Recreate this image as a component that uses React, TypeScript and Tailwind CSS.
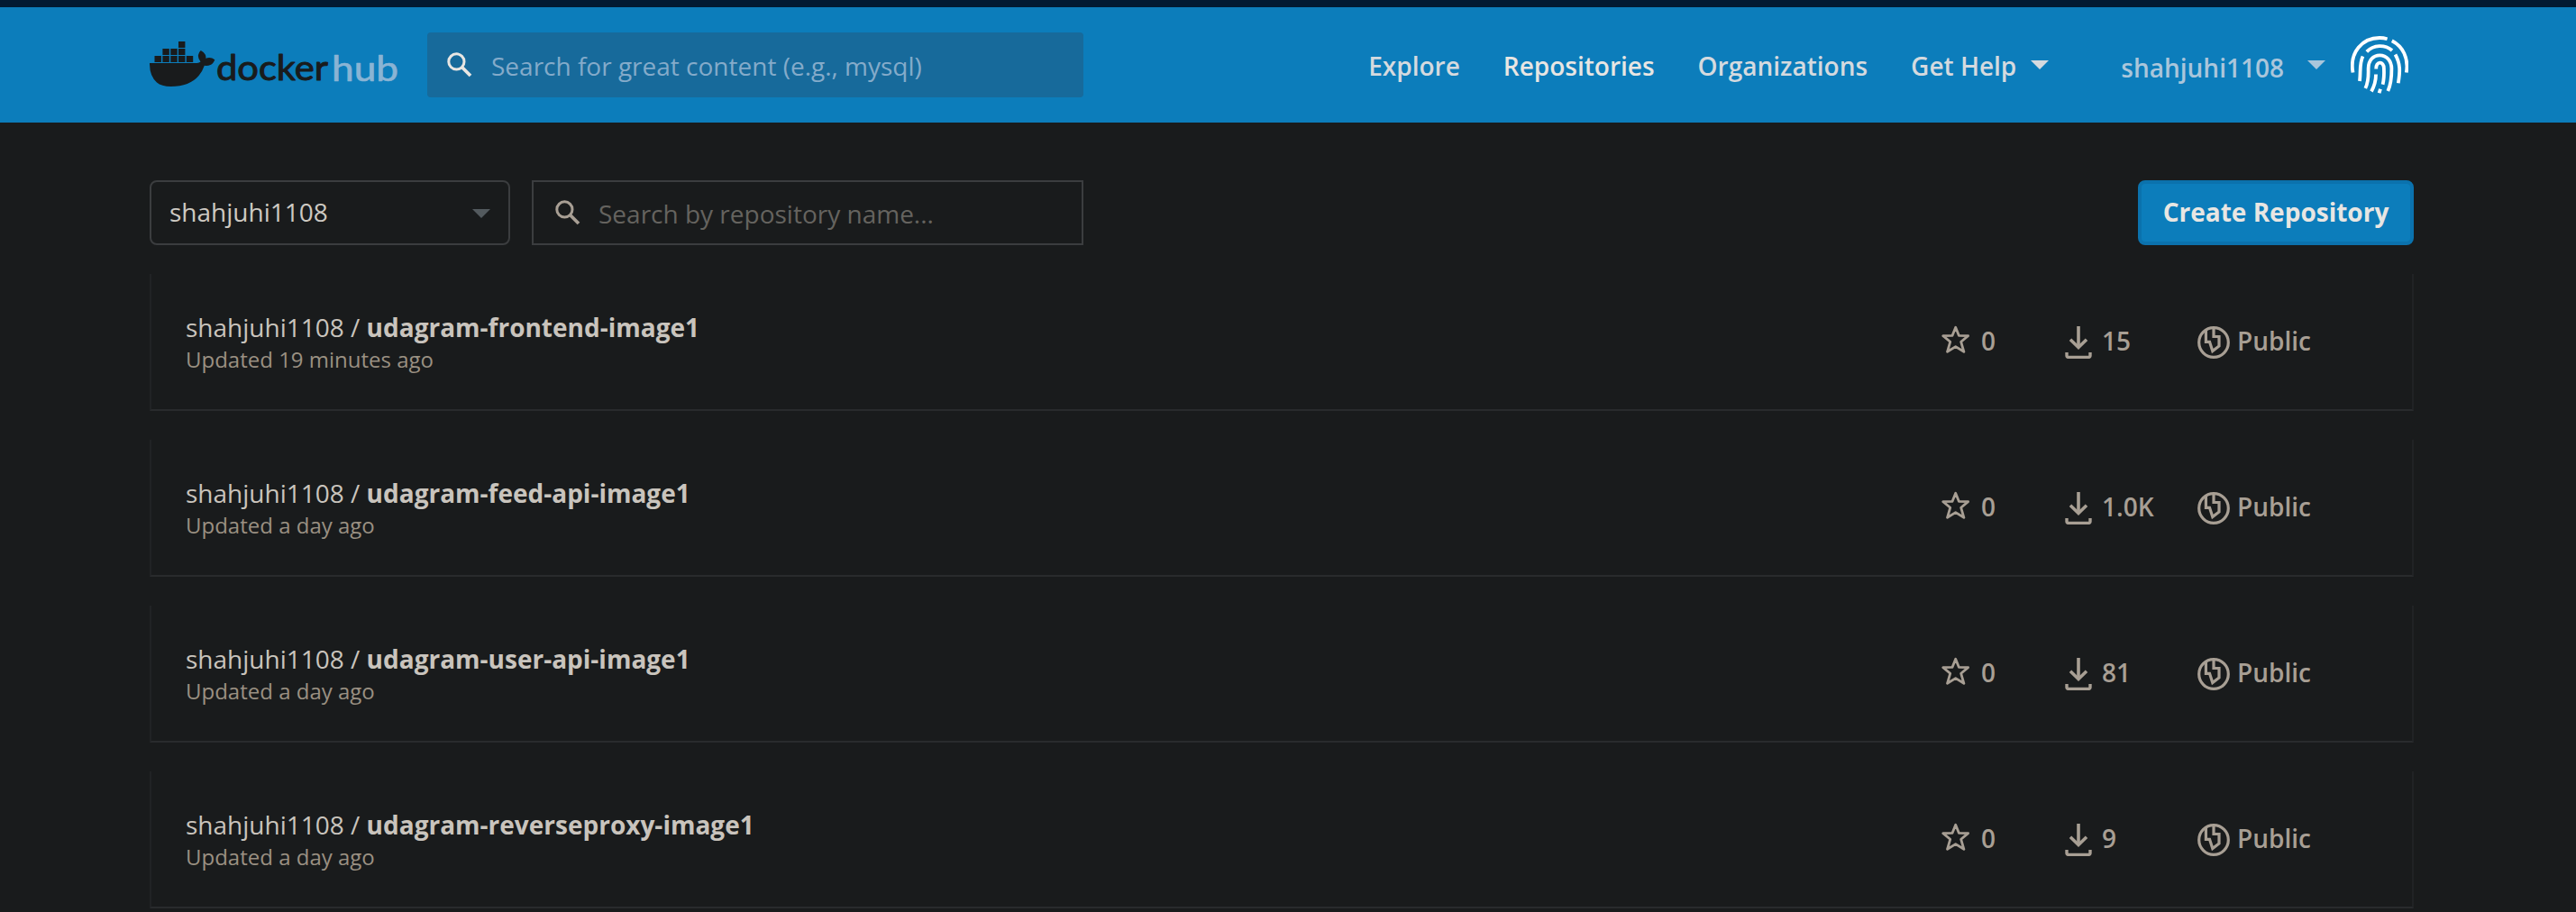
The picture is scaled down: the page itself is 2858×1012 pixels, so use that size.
import type { ReactNode } from "react";

const repositories = [
  { name: "udagram-frontend-image1", updated: "Updated 19 minutes ago", stars: "0", pulls: "15" },
  { name: "udagram-feed-api-image1", updated: "Updated a day ago", stars: "0", pulls: "1.0K" },
  { name: "udagram-user-api-image1", updated: "Updated a day ago", stars: "0", pulls: "81" },
  { name: "udagram-reverseproxy-image1", updated: "Updated a day ago", stars: "0", pulls: "9" },
];

const crates = [
  [32, 46],
  [14.4, 54], [23.3, 54], [32, 54],
  [5.5, 62], [14.4, 62], [23.3, 62], [32, 62], [40.8, 62],
];

function Logo() {
  return (
    <svg width="276" height="64" viewBox="0 40 276 64" className="block shrink-0">
      <g fill="#191b1c">
        {crates.map(([x, y]) => (
          <rect key={`${x}-${y}`} x={x} y={y} width="7.4" height="7" />
        ))}
        <path d="M0 70H52.6Q55 69.9 56.5 68.5Q53.4 64.5 54 61Q54.4 58 56.8 56Q60.5 58 61.7 60.5Q62.7 62.5 62.3 64.8Q67.5 62.6 72.3 66.2Q70.6 71 67.5 72Q64.5 73.3 60.8 72.8Q58.5 79.500 54.5 84Q44.5 95.8 23.5 96Q13 95.8 8 91.5Q-0.2 84.5 0 70Z" />
      </g>
      <g fontFamily="'Lato', 'Open Sans', sans-serif" fontSize="39" strokeLinejoin="round">
        <text x="74" y="89.2" textLength="124" lengthAdjust="spacingAndGlyphs" fill="#191b1c" stroke="#191b1c" strokeWidth="1">
          docker
        </text>
        <text x="202" y="90" textLength="74" lengthAdjust="spacingAndGlyphs" fill="#8ab4d4" stroke="#8ab4d4" strokeWidth="0.7">
          hub
        </text>
      </g>
    </svg>
  );
}

function SearchIcon({ className }: { className: string }) {
  return (
    <svg width="28" height="28" viewBox="0 0 28 28" fill="none" stroke="currentColor" className={className}>
      <circle cx="10.4" cy="10.4" r="8.6" strokeWidth="3" />
      <path d="M16.5 16.5L26 26" strokeWidth="3.8" />
    </svg>
  );
}

function Caret({ className }: { className: string }) {
  return (
    <svg width="20" height="10" viewBox="0 0 20 10" fill="currentColor" className={className}>
      <path d="M0 0H20L10 10Z" />
    </svg>
  );
}

function Fingerprint() {
  return (
    <svg width="64" height="64" viewBox="0 0 64 64" fill="none" stroke="#fff" strokeWidth="3.8" className="block shrink-0">
      <path d="M2.500 40.5C-1.5 18 13 2 32 2Q36.5 2 40.6 3.2" />
      <path d="M45.8 5.2C58 11.5 64.5 24.5 61.800 40.5" />
      <path d="M17.8 17.4C25.5 9.2 38 9.2 46 16" />
      <path d="M13.5 22.5C9.5 31 11.3 38 10 50" />
      <path d="M49.5 20.5C55.5 31 54.8 40 52.8 52.3" />
      <path d="M16.3 58C20.5 49 19.5 43 19.6 36C19.6 27 25 21.3 32.3 21.3C40 21.3 45.2 27.5 45.4 36C45.5 46 44.5 54 41.3 61" />
      <path d="M23 61.5C26.5 55 28 50 28 42.5" />
      <path d="M28.2 36.5C27.8 27.5 37 27.5 36.9 36C37.2 43 37 48 35.6 53.7" />
      <path d="M33 58.7L31.6 63.3" />
    </svg>
  );
}

function StarIcon() {
  return (
    <svg width="32" height="32" viewBox="0 0 32 32" fill="none" stroke="currentColor" strokeWidth="2.8" strokeLinejoin="round" className="block">
      <path d="M15.7 2.2L19.3 11.3L29.6 11.6L21.7 18.3L24.9 29.3L15.7 23.6L6.5 29.3L9.7 18.3L1.8 11.6L12.1 11.3Z" />
    </svg>
  );
}

function DownloadIcon() {
  return (
    <svg width="30" height="36" viewBox="0 0 30 36" fill="none" stroke="currentColor" className="block">
      <path d="M15 0V23" strokeWidth="3.6" />
      <path d="M6 14.8L15 23.5L24 14.8" strokeWidth="3.6" />
      <path d="M2 29V32.5Q2 34.4 4 34.4H26Q28 34.4 28 32.5V29" strokeWidth="3.4" />
    </svg>
  );
}

function GlobeIcon() {
  return (
    <svg width="36" height="36" viewBox="0 0 36 36" fill="none" stroke="currentColor" strokeWidth="3.2" className="block">
      <circle cx="18" cy="18" r="16.300" />
      <path d="M9.4 4.5V17.3H13.5L16.8 27.5L24 22V11.5H18V2" />
    </svg>
  );
}

function Stat({ icon, className, children }: { icon: ReactNode; className: string; children: ReactNode }) {
  return (
    <div className={`flex items-center ${className}`}>
      {icon}
      <span className="-mt-1">{children}</span>
    </div>
  );
}

export default function App() {
  return (
    <div className="h-[1012px] w-full overflow-hidden bg-[#191b1c] font-['Open_Sans',sans-serif] text-[28px] leading-[38px]">
      <header className="border-t-8 border-[#021a33] bg-[#0c7dbb]">
        <div className="ml-[166px] flex h-32 w-[2512px] items-center pr-[6px]">
          <Logo />
          <div className="ml-8 flex h-[72px] w-[728px] items-center rounded bg-[#176a9b] pl-[22px]">
            <SearchIcon className="-mt-px text-[#e8e6e3]" />
            <span className="mt-0.5 ml-[21px] text-[#84abca]">Search for great content (e.g., mysql)</span>
          </div>
          <nav className="ml-auto flex items-center font-semibold text-[#d5dadf]">
            <a className="mt-0.5 mr-12">Explore</a>
            <a className="mt-0.5 mr-12 text-[#e8e6e3]">Repositories</a>
            <a className="mt-0.5 mr-12">Organizations</a>
            <a className="mt-0.5">Get Help</a>
            <Caret className="ml-4" />
          </nav>
          <div className="ml-20 flex items-center text-[#aac6db]">
            <span className="mt-1.5 font-semibold">shahjuhi1108</span>
            <Caret className="ml-[26px]" />
            <div className="ml-7">
              <Fingerprint />
            </div>
          </div>
        </div>
      </header>

      <main className="ml-[166px] w-[2512px] pt-16">
        <div className="flex h-[72px] items-stretch">
          <button className="flex w-[400px] items-center justify-between rounded-lg border-2 border-[#3b3d3f] px-5 text-[#cdc9c2]">
            <span className="-mt-0.5">shahjuhi1108</span>
            <Caret className="mt-0.5 text-[#535a5e]" />
          </button>
          <div className="ml-6 flex w-[612px] items-center border-2 border-[#3b3d3f] pl-6">
            <SearchIcon className="-mt-px text-[#a89f94]" />
            <span className="mt-0.5 ml-5 text-[#65635f]">Search by repository name...</span>
          </div>
          <button className="ml-auto w-[306px] rounded-lg border-4 border-[#0b72ad] bg-[#0c7dbb] pb-0.5 font-bold text-[#e8e6e3]">
            Create Repository
          </button>
        </div>

        <div className="mt-8 flex flex-col gap-8">
          {repositories.map((repo) => (
            <article key={repo.name} className="flex h-[152px] justify-between border-x-2 border-b-2 border-x-[#212325] border-b-[#292b2d] pl-[38px]">
              <div className="pt-10 text-[#c9c4bd]">
                <div>
                  shahjuhi1108 / <b className="font-bold">{repo.name}</b>
                </div>
                <div className="text-2xl leading-[33px] text-[#9a9082]">{repo.updated}</div>
              </div>
              <div className="flex items-center pt-0.5 font-semibold text-[#a89f94]">
                <Stat icon={<div className="-mt-1.5"><StarIcon /></div>} className="w-[137px] gap-3">{repo.stars}</Stat>
                <Stat icon={<DownloadIcon />} className="w-[147px] gap-[11px]">{repo.pulls}</Stat>
                <Stat icon={<GlobeIcon />} className="w-[238px] gap-2">Public</Stat>
              </div>
            </article>
          ))}
        </div>
      </main>
    </div>
  );
}
